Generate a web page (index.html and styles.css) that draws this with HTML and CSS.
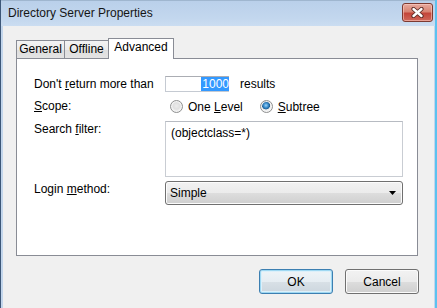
FILE: index.html
```html
<!DOCTYPE html>
<html>
<head>
<meta charset="utf-8">
<link rel="stylesheet" href="styles.css">
</head>
<body>
<div class="window">
  <div class="titlebar">
    <span class="title">Directory Server Properties</span>
    <div class="close">
      <svg width="13" height="11" viewBox="0 0 13 11">
        <path d="M2.5 2 L10.5 9 M10.5 2 L2.5 9" stroke="#5a2a25" stroke-width="4.2" stroke-linecap="round"/>
        <path d="M2.5 2 L10.5 9 M10.5 2 L2.5 9" stroke="#ffffff" stroke-width="2.4" stroke-linecap="round"/>
      </svg>
    </div>
  </div>
  <div class="client">
    <div class="tabs">
      <div class="tab tab-general">General</div>
      <div class="tab tab-offline">Offline</div>
      <div class="tab tab-advanced active">Advanced</div>
    </div>
    <div class="panel">
      <div class="form">
        <div class="label label-mid">Don't <u>r</u>eturn more than</div>
        <div class="ctl ctl-row">
          <div class="numbox"><span class="sel">1000</span></div>
          <span class="results">results</span>
        </div>

        <div class="label label-mid"><u>S</u>cope:</div>
        <div class="ctl ctl-row radios">
          <span class="radio"></span><span class="rlabel">One <u>L</u>evel</span>
          <span class="radio checked"></span><span class="rlabel"><u>S</u>ubtree</span>
        </div>

        <div class="label label-top">Search <u>f</u>ilter:</div>
        <div class="ctl">
          <div class="textarea">(objectclass=*)</div>
        </div>

        <div class="label label-top label-login">Login <u>m</u>ethod:</div>
        <div class="ctl ctl-login">
          <div class="select">
            <span>Simple</span>
            <svg width="7" height="4" viewBox="0 0 7 4"><path d="M0 0 H7 L3.5 4 Z" fill="#000"/></svg>
          </div>
        </div>
      </div>
    </div>
    <div class="buttons">
      <div class="btn default">OK</div>
      <div class="btn">Cancel</div>
    </div>
  </div>
</div>
</body>
</html>
```

FILE: styles.css
```css
html, body {
  margin: 0;
  padding: 0;
}
body {
  width: 437px;
  height: 308px;
  overflow: hidden;
  font-family: "Liberation Sans", Arial, sans-serif;
  font-size: 12px;
  color: #1e1e1e;
}
.window {
  box-sizing: border-box;
  width: 437px;
  height: 308px;
  display: flex;
  flex-direction: column;
  border-left: 1px solid #3d5778;
  border-right: 2px solid #5cc2ef;
  background: #c3d6ec;
}
.titlebar {
  height: 26px;
  flex: none;
  display: flex;
  align-items: flex-start;
  justify-content: space-between;
  background: linear-gradient(#bad0ea, #c3d7ee 70%, #cbddf1);
  border-top: 1px solid #9fb6cf;
  box-sizing: border-box;
}
.title {
  margin: 5px 0 0 7px;
  font-size: 12px;
  color: #151515;
}
.close {
  margin: 2px 2px 0 0;
  width: 31px;
  height: 19px;
  box-sizing: border-box;
  border: 1px solid #7d3a31;
  border-radius: 3px;
  background: linear-gradient(#e7aa9f, #d88372 45%, #c4453a 55%, #d0685a);
  box-shadow: inset 0 0 0 1px rgba(255,210,200,0.55);
  display: flex;
  align-items: center;
  justify-content: center;
}
.client {
  flex: 1;
  background: #f0f0f0;
  margin: 0 1px 0 2px;
  padding: 12px 16px 0 13px;
  display: flex;
  flex-direction: column;
}
.tabs {
  display: flex;
  align-items: flex-end;
  height: 20px;
  position: relative;
  z-index: 1;
}
.tab {
  box-sizing: border-box;
  height: 18px;
  border: 1px solid #898c95;
  border-bottom: none;
  background: linear-gradient(#f3f3f3, #ebebeb 50%, #dedede 51%, #e3e3e3);
  margin-right: -1px;
  text-align: center;
  line-height: 17px;
  color: #000;
}
.tab-general { width: 49px; }
.tab-offline { width: 45px; }
.tab-advanced { width: 66px; }
.tab.active {
  height: 21px;
  margin-bottom: -1px;
  background: #fff;
  line-height: 17px;
  padding-bottom: 3px;
}
.panel {
  box-sizing: border-box;
  height: 198px;
  background: #fff;
  border: 1px solid #898c95;
  padding: 17px 0 0 17px;
}
.form {
  display: grid;
  grid-template-columns: 131px 238px;
  grid-template-rows: 16px 29px 56px 28px;
}
.label {
  color: #000;
  line-height: 15px;
}
.label-mid {
  align-self: center;
}
.label-top {
  padding-top: 1px;
}
.label-login {
  margin-top: 4px;
}
.ctl-row {
  display: flex;
  align-items: center;
}
.numbox {
  box-sizing: border-box;
  width: 64px;
  height: 16px;
  border: 1px solid #c5cad2;
  border-top-color: #abadb3;
  border-right: none;
  display: flex;
  justify-content: flex-end;
  align-items: stretch;
  background: #fff;
}
.sel {
  background: #3399ff;
  color: #fff;
  line-height: 14px;
  padding: 0 0 0 1px;
}
.results {
  margin-left: 11px;
  color: #000;
}
.radios {
  padding-left: 5px;
}
.radio {
  box-sizing: border-box;
  width: 13px;
  height: 13px;
  border-radius: 50%;
  border: 1px solid #8e8f8f;
  background: radial-gradient(circle at 50% 45%, #ececec 0, #e0e0e0 40%, #f7f7f7 70%, #dcdcdc 100%);
  box-shadow: inset 0 0 0 1px #f4f4f4;
  flex: none;
}
.radio.checked {
  background: radial-gradient(circle at 45% 40%, #9fd3f6 0, #3b8fcf 25%, #1c5d93 42%, #e9e9e9 48%, #f7f7f7 70%, #dcdcdc 100%);
}
.rlabel {
  margin-left: 5px;
  margin-right: 17px;
  color: #000;
}
.textarea {
  box-sizing: border-box;
  width: 238px;
  height: 56px;
  border: 1px solid #c9cdd3;
  border-top-color: #b7bbc2;
  padding: 4px 5px;
  line-height: 15px;
  color: #000;
  background: #fff;
}
.ctl-login {
  margin-top: 4px;
}
.select {
  box-sizing: border-box;
  width: 238px;
  height: 24px;
  border: 1px solid #707070;
  border-radius: 3px;
  background: linear-gradient(#f2f2f2, #ebebeb 50%, #dddddd 51%, #cfcfcf);
  box-shadow: inset 0 0 0 1px #fcfcfc;
  display: flex;
  align-items: center;
  justify-content: space-between;
  padding: 0 6px 0 4px;
  color: #000;
}
.buttons {
  display: flex;
  justify-content: flex-end;
  gap: 12px;
  margin-top: 13px;
  margin-right: -1px;
}
.btn {
  box-sizing: border-box;
  width: 74px;
  height: 25px;
  border: 1px solid #707070;
  border-radius: 3px;
  background: linear-gradient(#f2f2f2, #ebebeb 50%, #dddddd 51%, #cfcfcf);
  box-shadow: inset 0 0 0 1px #fbfbfb;
  display: flex;
  align-items: center;
  justify-content: center;
  color: #000;
}
.btn.default {
  border-color: #3c7fb1;
  box-shadow: inset 0 0 0 1px #9fd8f2, inset 0 0 0 2px #dcf0fa;
  background: linear-gradient(#eef4f8, #e6edf2 50%, #d8e0e6 51%, #ccd6de);
}
```
